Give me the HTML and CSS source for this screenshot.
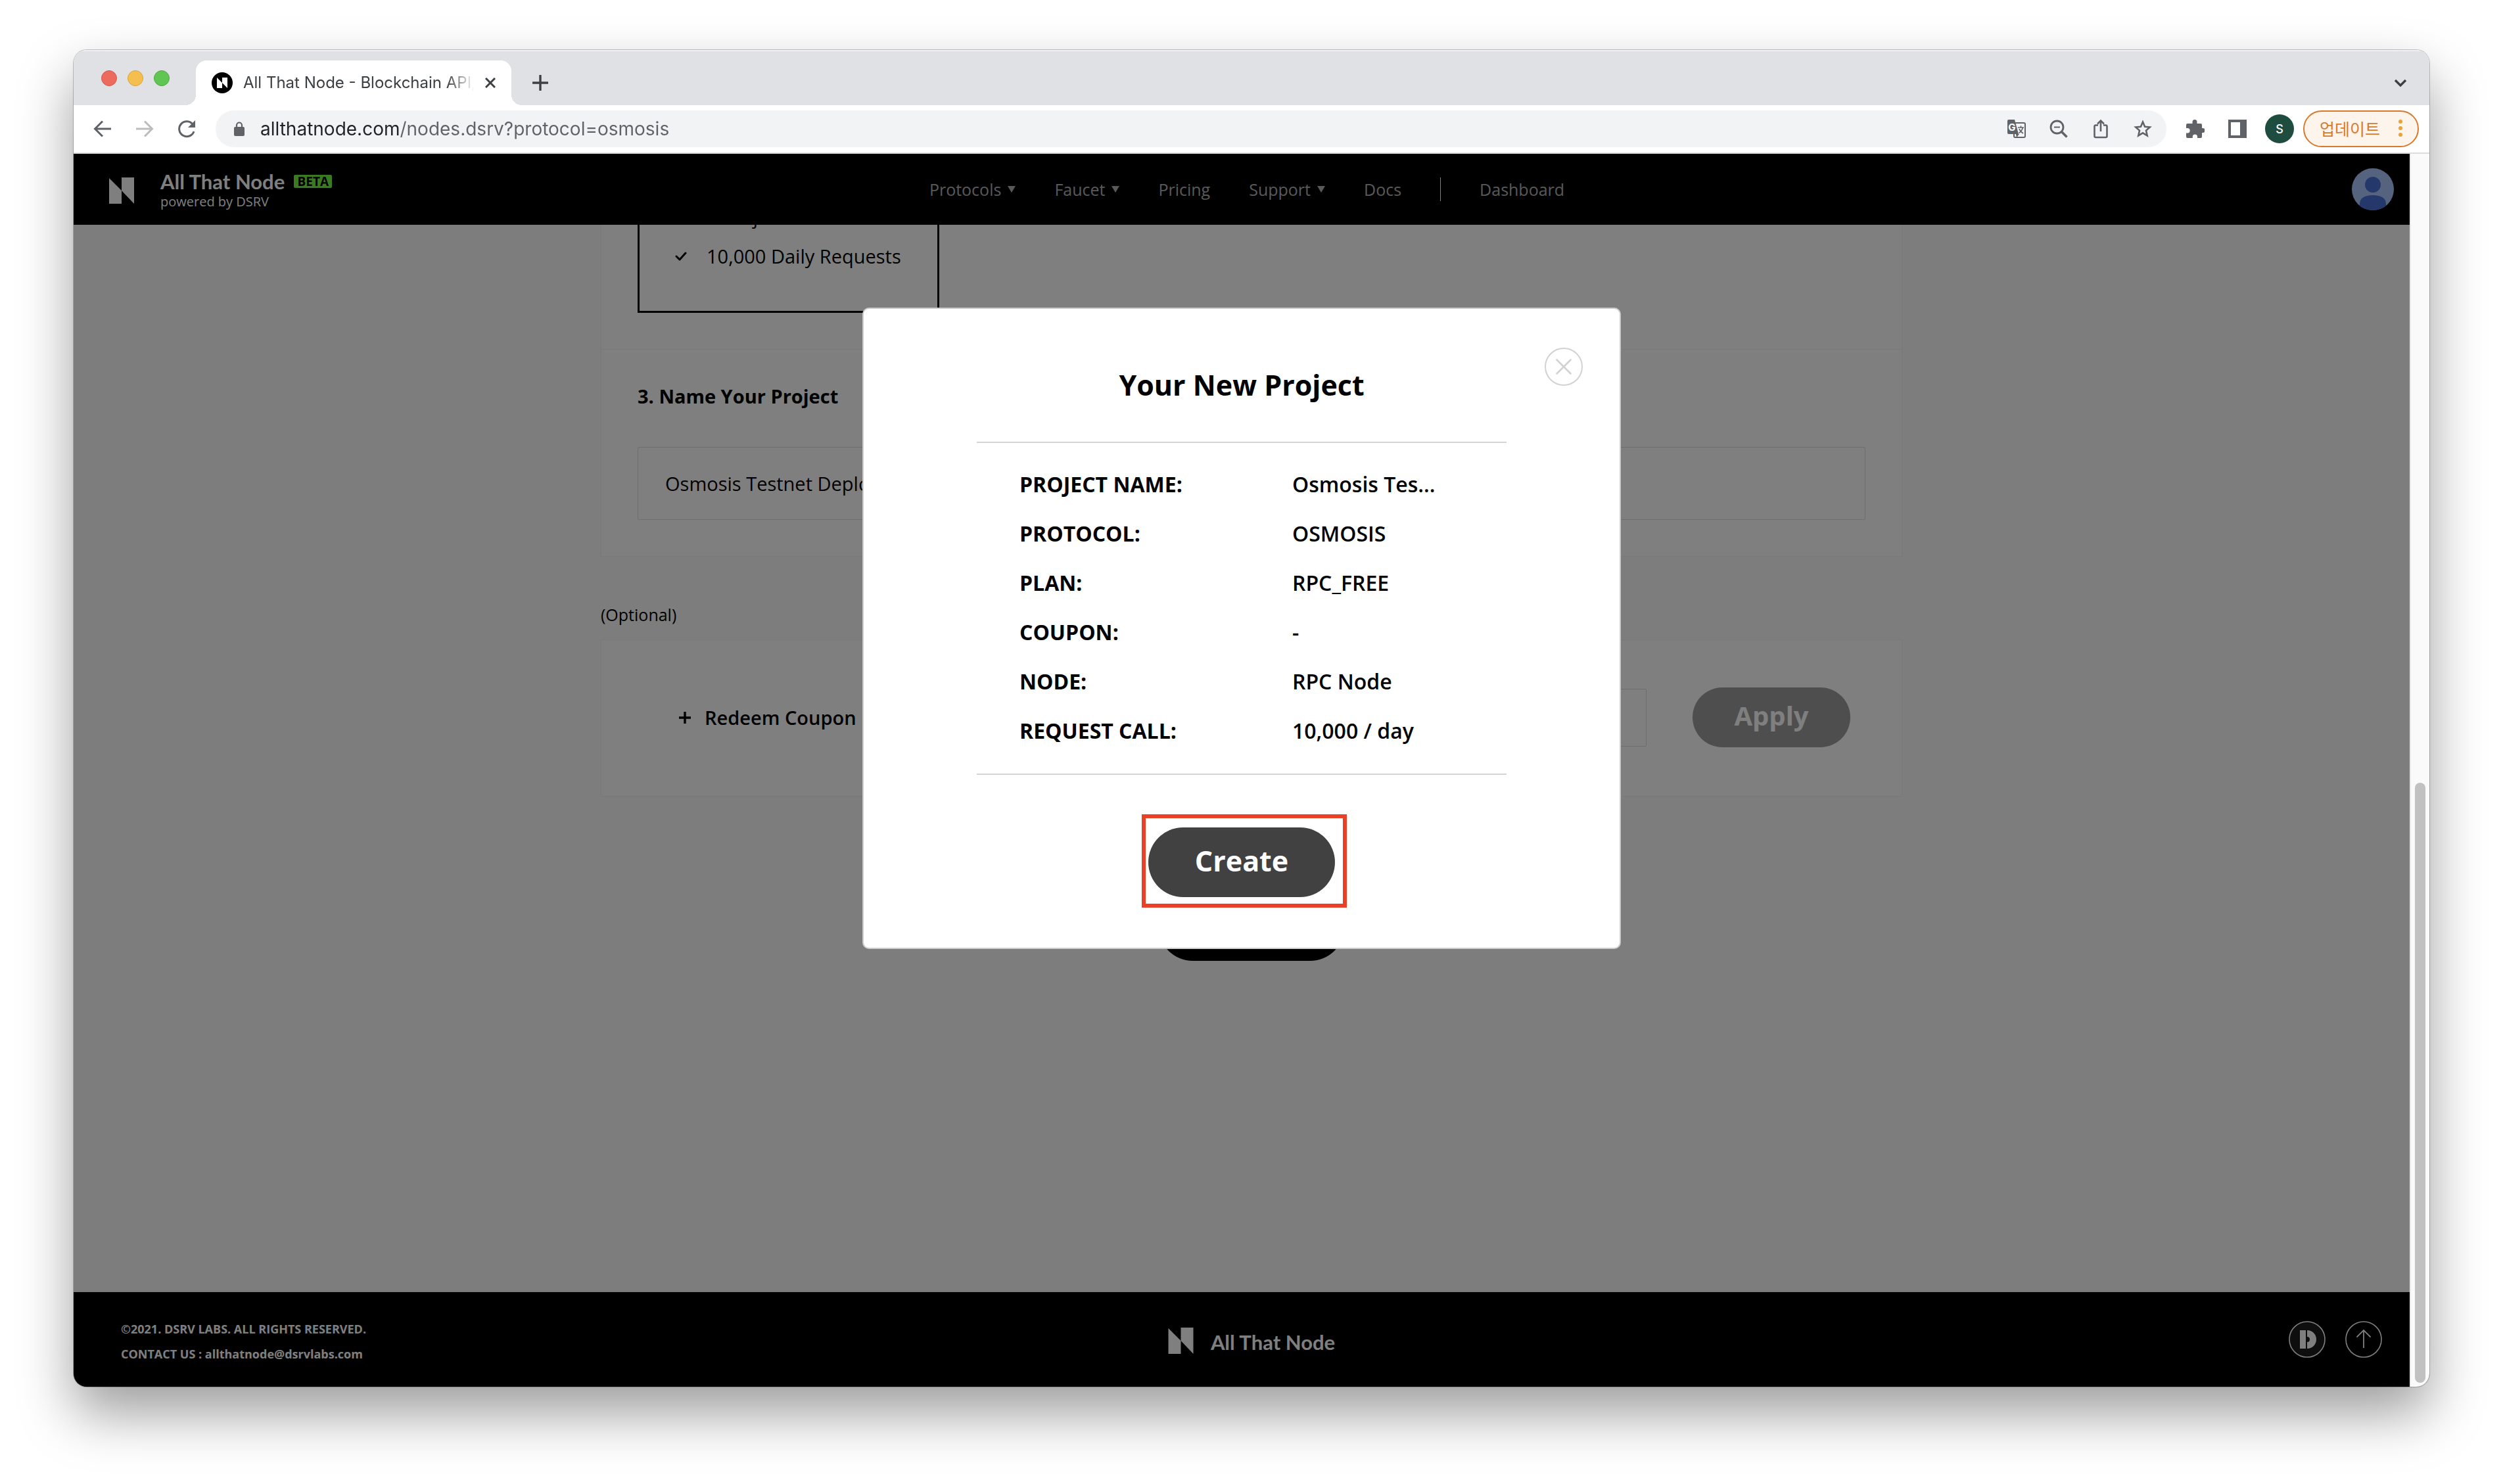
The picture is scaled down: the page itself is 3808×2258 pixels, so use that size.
FILE: index.html
```html
<!DOCTYPE html>
<html lang="en">
<head>
<meta charset="utf-8">
<title>All That Node - Blockchain API</title>
<link rel="stylesheet" href="styles.css">
</head>
<body>
<div class="window">
  <div class="tabstrip">
    <div class="lights"><span class="light light-red"></span><span class="light light-yellow"></span><span class="light light-green"></span></div>
    <div class="tab">
      <svg class="favicon" viewBox="0 0 32 32"><circle cx="16" cy="16" r="16" fill="#000"/><path fill="#fff" d="M8 8l8 8v8H8zM16 8h8v16l-8-8z"/></svg>
      <span class="tab-title">All That Node - Blockchain API, </span>
      <button class="icon-btn" aria-label="Close tab"><svg width="16" height="16" viewBox="0 0 16 16"><path d="M1 1l14 14M15 1L1 15" stroke="#3c4043" stroke-width="3"/></svg></button>
    </div>
    <button class="icon-btn new-tab" aria-label="New tab"><svg width="24" height="24" viewBox="0 0 24 24"><path d="M12 1v22M1 12h22" stroke="#3c4043" stroke-width="3.4" stroke-linecap="round"/></svg></button>
    <button class="icon-btn tab-search" aria-label="Search tabs"><svg width="20" height="12" viewBox="0 0 20 12"><path d="M2 2l8 8 8-8" fill="none" stroke="#3c4043" stroke-width="3.4"/></svg></button>
  </div>
  <div class="toolbar">
    <div class="history">
      <button class="icon-btn" aria-label="Back"><svg width="28" height="28" viewBox="0 0 28 28"><path d="M27 14H3M14 2.500L2.500 14 14 25.500" fill="none" stroke="#5f6368" stroke-width="3"/></svg></button>
      <button class="icon-btn" aria-label="Forward"><svg width="28" height="28" viewBox="0 0 28 28"><path d="M1 14h24M14 2.500L25.500 14 14 25.500" fill="none" stroke="#babcbe" stroke-width="3"/></svg></button>
      <button class="icon-btn" aria-label="Reload"><svg width="28" height="28" viewBox="0 0 28 28"><path d="M23.500 7.500A11.500 11.500 0 1 0 25 18" fill="none" stroke="#5f6368" stroke-width="3"/><path d="M27 1v11H16z" fill="#5f6368"/></svg></button>
    </div>
    <div class="omnibox">
      <svg width="16" height="22" viewBox="0 0 16 22"><path d="M4 9V5.500a4 4 0 0 1 8 0V9" fill="none" stroke="#5f6368" stroke-width="2.200"/><rect y="8" width="16" height="14" rx="2" fill="#5f6368"/></svg>
      <input class="url" type="text" aria-label="Address" value="allthatnode.com/nodes.dsrv?protocol=osmosis">
      <button class="icon-btn" aria-label="Translate"><svg width="28" height="28" viewBox="0 0 28 28"><rect x="10" y="5" width="17" height="22" rx="2" fill="none" stroke="#5f6368" stroke-width="2"/><path d="M2 0h9l6 22H2a2 2 0 0 1-2-2V2a2 2 0 0 1 2-2z" fill="#5f6368"/><path d="M13 22h5l-4 5z" fill="#5f6368"/><path d="M16 12h9M20.500 9.500V12M23.500 12c-1 4-3 6.500-6 8.500M18 14c1 3 3 5 6 7" fill="none" stroke="#5f6368" stroke-width="1.600"/><text x="7" y="17" font-size="15" font-weight="700" text-anchor="middle" fill="#fff" font-family="Inter, sans-serif">G</text></svg></button>
      <button class="icon-btn" aria-label="Zoom out"><svg width="28" height="28" viewBox="0 0 28 28"><circle cx="11.500" cy="11.500" r="9.500" fill="none" stroke="#5f6368" stroke-width="2.800"/><path d="M7 11.500h9" stroke="#5f6368" stroke-width="2"/><path d="M18 18l8.500 8.500" stroke="#5f6368" stroke-width="3.600"/></svg></button>
      <button class="icon-btn" aria-label="Share"><svg width="28" height="30" viewBox="0 0 28 30"><path d="M10 9.500H6.500a2 2 0 0 0-2 2V26a2 2 0 0 0 2 2h15a2 2 0 0 0 2-2V11.500a2 2 0 0 0-2-2H18M14 19V3M9 7.500l5-5 5 5" fill="none" stroke="#5f6368" stroke-width="2.600"/></svg></button>
      <button class="icon-btn" aria-label="Bookmark"><svg width="28" height="28" viewBox="0 0 28 28"><path d="M14 3.500l3.100 7.200 7.700.7-5.800 5.200 1.700 7.700-6.700-4-6.700 4L9 16.600l-5.800-5.200 7.700-.7z" fill="none" stroke="#5f6368" stroke-width="2.600"/></svg></button>
    </div>
    <button class="icon-btn gap-wide" aria-label="Extensions"><svg width="28" height="28" viewBox="0 0 28 28"><path fill="#5f6368" d="M2 6h7.500V3.500a3.500 3.500 0 0 1 7 0V6H22a2 2 0 0 1 2 2v5h1a3.500 3.500 0 0 1 0 7h-1v6a2 2 0 0 1-2 2h-5v-2a3.600 3.600 0 0 0-7.200 0v2H2a2 2 0 0 1-2-2v-5.500h2a3.700 3.700 0 0 0 0-7.400H0V8a2 2 0 0 1 2-2z"/></svg></button>
    <button class="icon-btn gap-wide" aria-label="Side panel"><svg width="28" height="28" viewBox="0 0 28 28"><path fill="#5f6368" fill-rule="evenodd" d="M0 0h28v28H0zM4 4v20h14V4z"/></svg></button>
    <button class="profile" aria-label="Profile">S</button>
    <button class="update">업데이트<svg width="6" height="28" viewBox="0 0 6 28"><g fill="#e8a33d"><circle cx="3" cy="4" r="3"/><circle cx="3" cy="14" r="3"/><circle cx="3" cy="24" r="3"/></g></svg></button>
  </div>

  <div class="viewport">
    <header class="site-header">
      <a class="brand" href="#">
        <svg width="38" height="40" viewBox="0 0 38 40"><path fill="#fff" d="M0 1l19 19v20H0zM19 0h19v40L19 20z"/></svg>
        <span class="brand-text">
          <span class="brand-line"><span class="wordmark">All That Node</span><span class="beta">BETA</span></span>
          <span class="powered">powered by DSRV</span>
        </span>
      </a>
      <nav class="nav">
        <a href="#">Protocols<span class="caret"></span></a>
        <a href="#">Faucet<span class="caret"></span></a>
        <a href="#">Pricing</a>
        <a href="#">Support<span class="caret"></span></a>
        <a href="#">Docs</a>
        <span class="nav-divider"></span>
        <a href="#">Dashboard</a>
      </nav>
      <button class="icon-btn account" aria-label="Account"><svg width="64" height="64" viewBox="0 0 64 64"><defs><clipPath id="face"><circle cx="32" cy="32" r="32"/></clipPath></defs><circle cx="32" cy="32" r="32" fill="#acc6ff"/><g fill="#4a70d6" clip-path="url(#face)"><circle cx="32" cy="25" r="12"/><path d="M12 64V54c0-8 7-13 20-13s20 5 20 13v10z"/></g></svg></button>
    </header>

    <main class="main">
      <section class="card card-open">
        <div class="plan-section">
          <ul class="plan">
            <li><svg width="18" height="14" viewBox="0 0 18 14"><path d="M2 7l5 5 9-10" fill="none" stroke="#000" stroke-width="3" stroke-linecap="round" stroke-linejoin="round"/></svg>1 Project</li>
            <li><svg width="18" height="14" viewBox="0 0 18 14"><path d="M2 7l5 5 9-10" fill="none" stroke="#000" stroke-width="3" stroke-linecap="round" stroke-linejoin="round"/></svg>10,000 Daily Requests</li>
          </ul>
        </div>
        <div class="name-section">
          <label class="step" for="project-name">3. Name Your Project</label>
          <input class="field" id="project-name" type="text" value="Osmosis Testnet Deployment">
        </div>
      </section>
      <p class="optional">(Optional)</p>
      <section class="card coupon">
        <svg width="18" height="18" viewBox="0 0 18 18"><path d="M9 0v18M0 9h18" stroke="#000" stroke-width="3.400"/></svg>
        <label class="coupon-label" for="coupon">Redeem Coupon</label>
        <input class="field coupon-field" id="coupon" type="text">
        <button class="apply">Apply</button>
      </section>
      <button class="pill submit">Create</button>
    </main>

    <footer class="site-footer">
      <div class="legal"><p>©2021. DSRV LABS. ALL RIGHTS RESERVED.</p><p>CONTACT US : allthatnode@dsrvlabs.com</p></div>
      <a class="footer-brand" href="#"><svg width="39" height="40" viewBox="0 0 38 40"><path fill="#fff" d="M0 1l19 19v20H0zM19 0h19v40L19 20z"/></svg><span class="wordmark">All That Node</span></a>
      <div class="footer-actions">
        <a href="#" aria-label="DSRV"><svg width="56" height="56" viewBox="0 0 56 56"><circle cx="28" cy="28" r="27" fill="#1c1c1c" stroke="#fff" stroke-width="1.600"/><path fill="#fff" d="M17 14h9v28h-9zM28 14a14 14 0 0 1 0 28V32a4 4 0 0 0 0-8z"/></svg></a>
        <a href="#" aria-label="Back to top"><svg width="56" height="56" viewBox="0 0 56 56"><circle cx="28" cy="28" r="27" fill="none" stroke="#fff" stroke-width="1.600"/><path d="M28 41V14M17.500 24.500L28 14l10.500 10.500" fill="none" stroke="#fff" stroke-width="1.800"/></svg></a>
      </div>
    </footer>

    <div class="backdrop">
      <div class="modal" role="dialog" aria-labelledby="modal-title">
        <button class="icon-btn modal-close" aria-label="Close"><svg width="58" height="58" viewBox="0 0 58 58"><circle cx="29" cy="29" r="28" fill="none" stroke="#d2d2d2" stroke-width="2"/><path d="M18.500 18.500l21 21M39.500 18.500l-21 21" stroke="#d2d2d2" stroke-width="2.600" stroke-linecap="round"/></svg></button>
        <h2 class="modal-title" id="modal-title">Your New Project</h2>
        <dl class="summary">
          <dt>PROJECT NAME:</dt><dd>Osmosis Tes...</dd>
          <dt>PROTOCOL:</dt><dd>OSMOSIS</dd>
          <dt>PLAN:</dt><dd>RPC_FREE</dd>
          <dt>COUPON:</dt><dd>-</dd>
          <dt>NODE:</dt><dd>RPC Node</dd>
          <dt>REQUEST CALL:</dt><dd>10,000 / day</dd>
        </dl>
        <div class="create-wrap"><button class="pill create">Create</button><span class="highlight"></span></div>
      </div>
    </div>
    <div class="scrollbar"><div class="thumb"></div></div>
  </div>
</div>
</body>
</html>
```
FILE: styles.css
```css
* { box-sizing: border-box; }

body {
  display: flex;
  min-height: 100vh;
  margin: 0;
  padding: 76px 112px 148px;
  background: #fff;
  color: #000;
  font-family: "Open Sans", "Noto Sans", sans-serif;
}

button, input { font: inherit; color: inherit; }
a { color: inherit; text-decoration: none; }
svg { display: block; flex: none; }
p, h2, ul, dl, dd { margin: 0; padding: 0; }

.icon-btn {
  flex: none;
  padding: 0;
  border: 0;
  background: none;
}

/* Browser window */
.window {
  display: flex;
  flex: 1;
  flex-direction: column;
  min-width: 0;
  overflow: hidden;
  border-radius: 20px;
  box-shadow: 0 0 0 1px rgba(0, 0, 0, .22), 0 40px 84px rgba(0, 0, 0, .39);
}

.tabstrip {
  display: flex;
  align-items: center;
  height: 84px;
  padding: 0 34px 0 42px;
  border-top: 2px solid #f0f0f2;
  background: #dfe1e5;
  font-family: Inter, sans-serif;
}
.lights { display: flex; gap: 16px; margin-right: 40px; }
.light { width: 24px; height: 24px; border: 1px solid; border-radius: 50%; }
.light-red { border-color: #d6564b; background: #ed6a5e; }
.light-yellow { border-color: #dba23c; background: #f5bf4f; }
.light-green { border-color: #51a73e; background: #61c554; }

.tab {
  position: relative;
  display: flex;
  align-items: center;
  align-self: flex-end;
  width: 480px;
  height: 68px;
  padding: 0 24px;
  border-radius: 16px 16px 0 0;
  background: #fff;
}
.tab::before, .tab::after {
  content: "";
  position: absolute;
  bottom: 0;
  width: 16px;
  height: 16px;
}
.tab::before { right: 100%; background: radial-gradient(circle at 0 0, transparent 16px, #fff 16px); }
.tab::after { left: 100%; background: radial-gradient(circle at 100% 0, transparent 16px, #fff 16px); }
.favicon { width: 32px; height: 32px; }
.tab-title {
  flex: 1;
  margin: 0 18px 0 16px;
  overflow: hidden;
  color: #3c4043;
  font-size: 24px;
  line-height: 32px;
  white-space: nowrap;
  -webkit-mask-image: linear-gradient(90deg, #000 310px, transparent 352px);
  mask-image: linear-gradient(90deg, #000 310px, transparent 352px);
}
.new-tab { align-self: flex-end; margin: 0 0 22px 32px; }
.tab-search { align-self: flex-end; margin: 0 0 28px auto; }

.toolbar {
  display: flex;
  align-items: center;
  height: 74px;
  padding: 0 16px 0 30px;
  border-bottom: 2px solid #dcdcdc;
  background: #fff;
  font-family: Inter, "Noto Sans CJK KR", sans-serif;
}
.history { display: flex; gap: 36px; margin-right: 30px; }
.omnibox {
  display: flex;
  flex: 1;
  align-items: center;
  gap: 36px;
  height: 56px;
  margin-right: 30px;
  padding: 0 22px 0 28px;
  border-radius: 28px;
  background: #f1f3f4;
}
.url {
  flex: 1;
  min-width: 0;
  margin-left: -12px;
  padding: 0;
  border: 0;
  outline: 0;
  background: linear-gradient(90deg, #202124 213px, #5f6368 213px);
  -webkit-background-clip: text;
  background-clip: text;
  color: transparent;
  font-size: 28px;
  line-height: 40px;
}
.gap-wide + .gap-wide { margin-left: 36px; }
.profile {
  width: 44px;
  height: 44px;
  margin: 0 14px 0 28px;
  padding: 0;
  border: 0;
  border-radius: 50%;
  background: #1e4d40;
  color: #fff;
  font-size: 18px;
  font-weight: 500;
}
.update {
  display: flex;
  align-items: center;
  justify-content: space-between;
  width: 176px;
  height: 56px;
  padding: 0 23px 2px;
  border: 2px solid #d9792b;
  border-radius: 28px;
  background: #fdf5eb;
  color: #d9792b;
  font-size: 25px;
}

/* Page shown in the window */
.viewport {
  position: relative;
  display: flex;
  flex: 1;
  flex-direction: column;
  background: #fafafa;
}

.site-header {
  display: grid;
  grid-template-columns: 1fr auto 1fr;
  align-items: center;
  height: 108px;
  padding: 0 54px;
  background: #000;
  color: #fff;
}
.brand { display: flex; align-items: center; gap: 40px; padding-top: 4px; }
.brand-text { display: flex; flex-direction: column; gap: 3px; padding-top: 2px; }
.brand-line { display: flex; align-items: center; gap: 14px; }
.wordmark { font-family: Lato, sans-serif; font-size: 31px; font-weight: 700; line-height: 28px; }
.beta {
  width: 58px;
  border-radius: 2px;
  background: #74f644;
  color: #000;
  font-size: 19px;
  font-weight: 700;
  line-height: 20px;
  text-align: center;
}
.powered { font-size: 20px; line-height: 28px; }
.nav {
  display: flex;
  align-items: center;
  gap: 59px;
  padding-right: 14px;
  color: #b3b3b3;
  font-size: 25px;
  line-height: 36px;
}
.nav a { display: flex; align-items: center; gap: 10px; }
.caret {
  border: solid transparent;
  border-width: 10px 6px 0;
  border-top-color: #b3b3b3;
}
.nav-divider { width: 1px; height: 36px; background: #fff; }
.account { justify-self: end; border-radius: 50%; }

.main {
  display: flex;
  flex: 1;
  flex-direction: column;
  width: 100%;
  max-width: 1980px;
  margin: 0 auto;
}
.card { border: 1px solid #f2f2f2; background: #fff; }
.card-open { border-top: 0; }
.plan-section { padding: 0 55px 55px; border-bottom: 1px solid #f2f2f2; }
.plan {
  display: flex;
  flex-direction: column;
  justify-content: flex-end;
  width: 459px;
  height: 134px;
  padding: 0 54px 53px;
  overflow: hidden;
  border: 3px solid #000;
  border-top: 0;
  list-style: none;
}
.plan li {
  display: flex;
  flex: none;
  align-items: center;
  gap: 30px;
  font-size: 29px;
  line-height: 60px;
  white-space: nowrap;
}
.name-section { display: flex; flex-direction: column; padding: 51px 55px 55px; }
.step { margin-bottom: 57px; font-size: 29px; font-weight: 700; line-height: 40px; }
.field {
  height: 111px;
  padding: 0 41px;
  border: 1px solid #dcdcdc;
  border-radius: 2px;
  background: #fff;
  font-size: 29px;
}
.optional { margin: 70px 0 20px; font-size: 25px; line-height: 36px; }
.coupon { display: flex; align-items: center; height: 239px; padding: 0 78px 2px 118px; }
.coupon-label { margin: 0 100px 0 21px; font-size: 29px; font-weight: 600; }
.coupon-field { flex: 1; min-width: 0; height: 88px; margin-right: 70px; }
.apply {
  width: 240px;
  height: 91px;
  padding: 0 0 6px;
  border: 0;
  border-radius: 46px;
  background: #9d9d9d;
  color: #fff;
  font-size: 40px;
  font-weight: 700;
  line-height: 60px;
}
.pill {
  width: 284px;
  height: 106px;
  padding: 0 0 4px;
  border: 0;
  border-radius: 53px;
  background: #000;
  color: #fff;
  font-size: 43px;
  font-weight: 700;
  line-height: 60px;
}
.submit { align-self: center; margin-top: 144px; }

.site-footer {
  display: grid;
  grid-template-columns: 1fr auto 1fr;
  align-items: center;
  height: 144px;
  padding: 0 72px;
  background: #000;
  color: #fff;
}
.legal { padding-top: 6px; font-size: 18px; font-weight: 700; line-height: 38px; }
.footer-brand { display: flex; align-items: center; gap: 26px; padding-top: 4px; }
.footer-brand .wordmark { padding-top: 4px; }
.footer-actions { display: flex; gap: 30px; justify-self: end; }

/* Dialog */
.backdrop {
  position: absolute;
  inset: 0 30px 0 0;
  display: flex;
  align-items: flex-start;
  justify-content: center;
  padding-top: 234px;
  background: rgba(0, 0, 0, .5);
}
.modal {
  position: relative;
  display: flex;
  flex-direction: column;
  align-items: center;
  width: 1154px;
  padding: 86px 0 77px;
  border: 2px solid #ccc;
  border-radius: 10px;
  background: #fff;
}
.modal-close { position: absolute; top: 59px; right: 56px; }
.modal-title { font-size: 43px; font-weight: 700; line-height: 60px; }
.summary {
  display: grid;
  grid-template-columns: 415px 1fr;
  width: 806px;
  margin: 56px 0 80px;
  padding: 25px 0 28px 65px;
  border: solid #d4d4d4;
  border-width: 2px 0;
  font-size: 32px;
  line-height: 75px;
}
.summary dt { font-weight: 700; }
.summary dd { font-weight: 600; }
.create-wrap { position: relative; display: flex; }
.create { background: #414141; }
.highlight {
  position: absolute;
  inset: -20px -18px -16px -10px;
  border: 6px solid #ea4025;
  pointer-events: none;
}

.scrollbar {
  position: absolute;
  inset: 0 0 0 auto;
  display: flex;
  flex-direction: column;
  justify-content: flex-end;
  width: 30px;
  padding: 6px;
  border-left: 2px solid #e8e8e8;
  background: #fafafa;
}
.thumb { height: 49%; border-radius: 8px; background: #c1c1c1; }
```
